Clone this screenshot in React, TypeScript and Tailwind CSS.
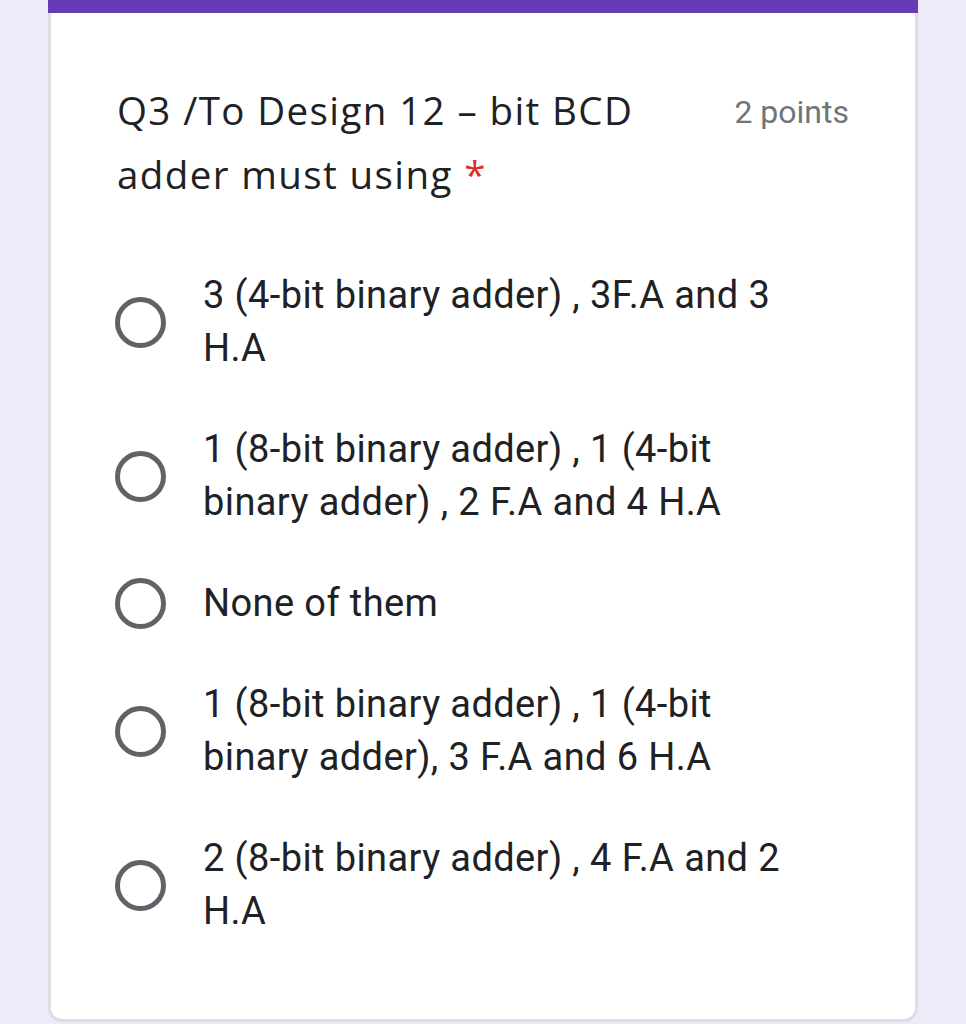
import React from "react";

const options: string[][] = [
  ["3 (4-bit binary adder) , 3F.A and 3", "H.A"],
  ["1 (8-bit binary adder) , 1 (4-bit", "binary adder) , 2 F.A and 4 H.A"],
  ["None of them"],
  ["1 (8-bit binary adder) , 1 (4-bit", "binary adder), 3 F.A and 6 H.A"],
  ["2 (8-bit binary adder) , 4 F.A and 2", "H.A"],
];

function Radio() {
  return (
    <div className="w-[51px] h-[51px] shrink-0 rounded-full border-[5px] border-[#5f6368]" />
  );
}

export default function App() {
  return (
    <div className="w-[966px] h-[1024px] overflow-hidden bg-[#efeaf8]">
      <div className="ml-[48px] w-[870px] h-[1022px] flex flex-col">
        <div className="h-[13px] bg-[#673ab7] shrink-0" />
        <div className="flex-1 bg-white border-x-[3px] border-b-[3px] border-[#dedde3] rounded-b-[14px] pl-[66px] pr-[66px] pt-[65px]">
          <div className="flex justify-between items-start">
            <div
              className="text-[38.5px] leading-[64px] text-[#202124] tracking-[1.4px]"
              style={{ fontFamily: "'Open Sans', sans-serif" }}
            >
              Q3 /To Design 12 – bit BCD
              <br />
              adder must using <span className="text-[#d93025]">*</span>
            </div>
            <div
              className="text-[32px] leading-[64px] text-[#70757a] pt-[2px]"
              style={{ fontFamily: "Roboto, sans-serif" }}
            >
              2 points
            </div>
          </div>
          <div className="mt-[63px] flex flex-col gap-[48px]">
            {options.map((lines, i) => (
              <div key={i} className="flex items-center">
                <div className="ml-[-2px]">
                  <Radio />
                </div>
                <div
                  className="ml-[37px] text-[38px] leading-[53px] text-[#202124] tracking-[0.4px]"
                  style={{ fontFamily: "Roboto, sans-serif" }}
                >
                  {lines.map((l, j) => (
                    <div key={j}>{l}</div>
                  ))}
                </div>
              </div>
            ))}
          </div>
        </div>
      </div>
    </div>
  );
}
